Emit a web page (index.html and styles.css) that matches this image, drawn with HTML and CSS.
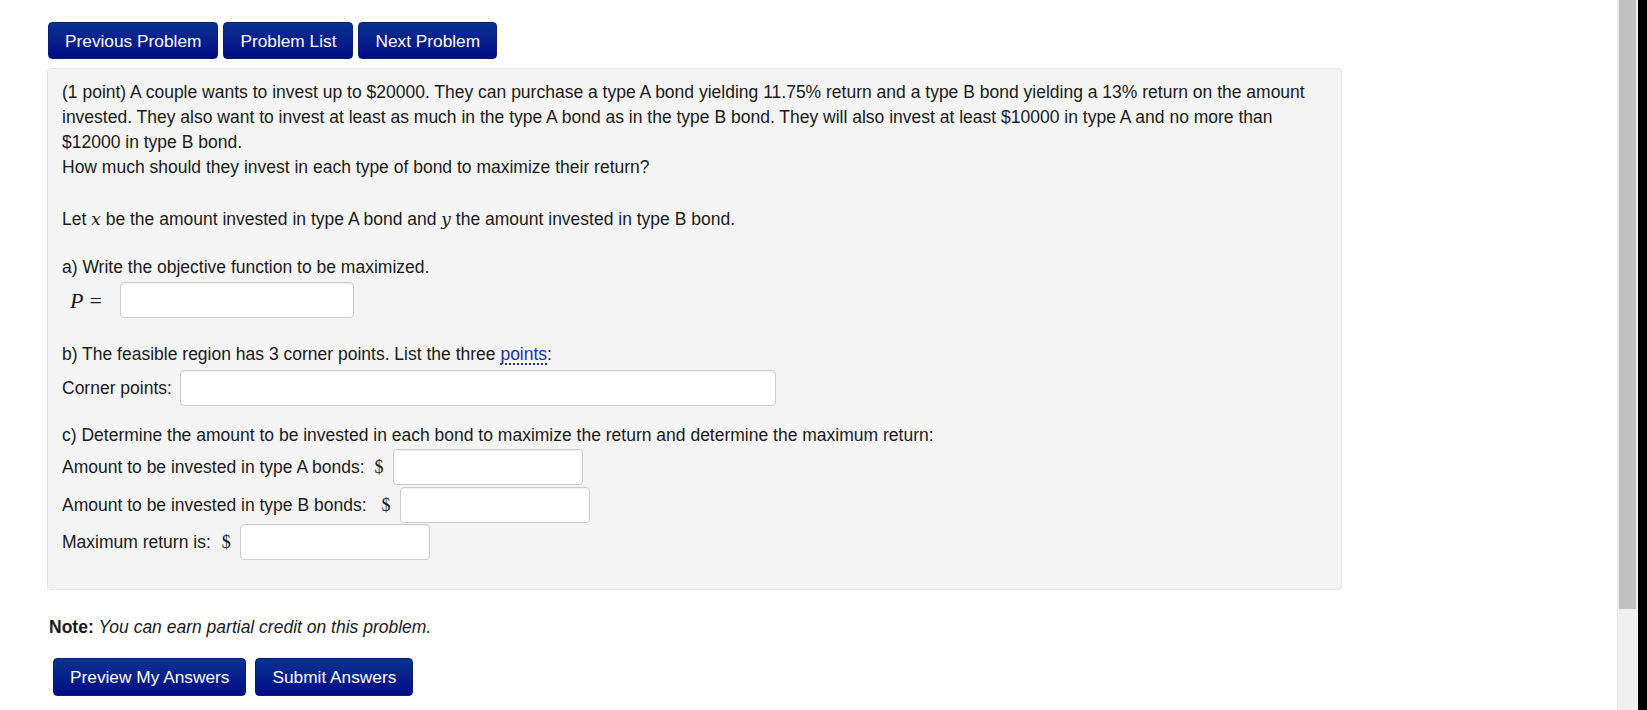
FILE: index.html
```html
<!DOCTYPE html>
<html lang="en">
<head>
<meta charset="utf-8">
<title>Problem</title>
<link rel="stylesheet" href="styles.css">
</head>
<body>
<div class="page">
  <nav class="nav">
    <button class="btn">Previous Problem</button>
    <button class="btn">Problem List</button>
    <button class="btn">Next Problem</button>
  </nav>

  <div class="panel">
    <p class="intro">(1 point) A couple wants to invest up to $20000. They can purchase a type A bond yielding 11.75% return and a type B bond yielding a 13% return on the amount invested. They also want to invest at least as much in the type A bond as in the type B bond. They will also invest at least $10000 in type A and no more than $12000 in type B bond.<br>How much should they invest in each type of bond to maximize their return?</p>

    <p class="let">Let <span class="mi">x</span> be the amount invested in type A bond and <span class="mi">y</span> the amount invested in type B bond.</p>

    <p class="part-a">a) Write the objective function to be maximized.</p>
    <div class="row row-p">
      <span class="math-p"><span class="mi">P</span><span class="mo">=</span></span>
      <input class="field field-p" type="text">
    </div>

    <p class="part-b">b) The feasible region has 3 corner points. List the three <span class="knowl">points</span>:</p>
    <div class="row row-corner">
      <span class="label">Corner points:</span>
      <input class="field field-corner" type="text">
    </div>

    <p class="part-c">c) Determine the amount to be invested in each bond to maximize the return and determine the maximum return:</p>
    <div class="row row-a">
      <span class="label">Amount to be invested in type A bonds:</span>
      <span class="dollar dollar-a">$</span>
      <input class="field field-money" type="text">
    </div>
    <div class="row row-b">
      <span class="label">Amount to be invested in type B bonds:</span>
      <span class="dollar dollar-b">$</span>
      <input class="field field-money" type="text">
    </div>
    <div class="row row-max">
      <span class="label">Maximum return is:</span>
      <span class="dollar dollar-m">$</span>
      <input class="field field-money" type="text">
    </div>
  </div>

  <p class="note"><b>Note:</b> <i>You can earn partial credit on this problem.</i></p>

  <div class="actions">
    <button class="btn btn-lg">Preview My Answers</button>
    <button class="btn btn-lg">Submit Answers</button>
  </div>
</div>

<div class="scrollbar"><div class="track"><div class="thumb"></div></div><div class="edge"></div></div>
</body>
</html>
```

FILE: styles.css
```css
html, body {
  margin: 0;
  padding: 0;
  background: #ffffff;
}

body {
  font-family: "Liberation Sans", Arial, sans-serif;
  font-size: 17.5px;
  line-height: 25px;
  color: #1a1a1a;
}

.page {
  padding: 22px 0 0 48px;
  width: 1294px;
}

.nav {
  display: flex;
  gap: 5px;
}

.btn {
  font-family: "Liberation Sans", Arial, sans-serif;
  font-size: 17.3px;
  line-height: 20px;
  color: #ffffff;
  height: 37px;
  padding: 0 16px;
  border: 1px solid #061f6e;
  border-radius: 4px;
  background: linear-gradient(to bottom, #0b3391 0%, #010c86 100%);
  cursor: pointer;
}

.btn-lg {
  height: 38px;
}

.panel {
  margin: 9px 0 0 -1px;
  box-sizing: border-box;
  width: 1295px;
  height: 522px;
  padding: 11px 22px 0 14px;
  background: #f4f4f4;
  border: 1px solid #e4e4e4;
  border-radius: 4px;
}

.panel p {
  margin: 0;
}

.let { margin-top: 27px !important; }
.part-a { margin-top: 23px !important; }
.part-b { margin-top: 24px !important; }
.part-c { margin-top: 17px !important; }

.mi {
  font-family: "DejaVu Serif", "Liberation Serif", serif;
  font-style: italic;
  font-size: 17px;
}

.row {
  display: flex;
  align-items: center;
}

.row-p { margin-top: 2px; }
.row-corner { margin-top: 3px; }
.row-a { margin-top: 1px; }
.row-b { margin-top: 2px; }
.row-max { margin-top: 1px; }

.math-p {
  display: inline-flex;
  align-items: center;
  padding-left: 8px;
  width: 50px;
  font-family: "Liberation Serif", serif;
}

.math-p .mi {
  font-family: "Liberation Serif", serif;
  font-size: 22px;
}

.math-p .mo {
  font-size: 22px;
  margin-left: 6px;
}

.field {
  box-sizing: border-box;
  height: 36px;
  background: #ffffff;
  border: 1px solid #cccccc;
  border-radius: 4px;
  box-shadow: inset 0 1px 1px rgba(0, 0, 0, 0.06);
  margin: 0;
}

.field-p { width: 234px; }

.field-corner {
  width: 596px;
  margin-left: 8px;
}

.field-money { width: 190px; }

.dollar {
  font-family: "Liberation Serif", serif;
  font-size: 18px;
  margin-right: 9px;
}

.dollar-a { margin-left: 10px; }
.dollar-b { margin-left: 15px; }
.dollar-m { margin-left: 11px; }

.knowl {
  color: #1f2f9e;
  border-bottom: 2px dotted #1f2f9e;
  line-height: 18px;
  display: inline-block;
}

.note {
  margin: 25px 0 0 1px;
}

.actions {
  display: flex;
  gap: 9px;
  margin: 18px 0 0 5px;
}

.scrollbar {
  position: fixed;
  top: 0;
  right: 0;
  width: 30px;
  height: 100%;
  display: flex;
}

.track {
  width: 21px;
  height: 100%;
  background: #f0f0f0;
  border-left: 1px solid #e8e8e8;
  box-sizing: border-box;
  padding-left: 1px;
}

.thumb {
  width: 17px;
  height: 609px;
  background: #c1c1c1;
}

.edge {
  width: 9px;
  height: 100%;
  background: #000000;
}
```
